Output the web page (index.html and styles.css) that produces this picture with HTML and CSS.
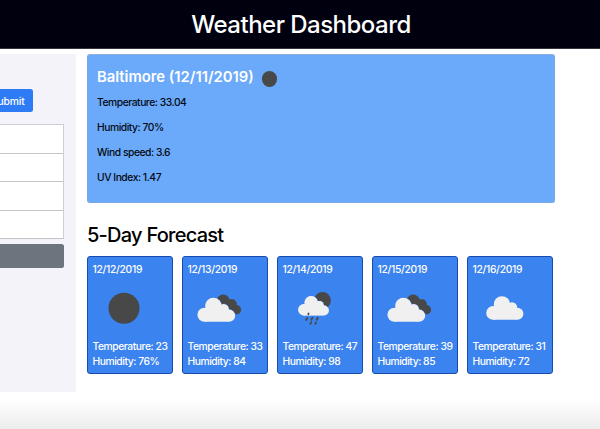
FILE: index.html
```html
<!DOCTYPE html>
<html lang="en">
<head>
<meta charset="utf-8">
<title>Weather Dashboard</title>
<link rel="stylesheet" href="styles.css">
</head>
<body>
<svg class="defs" aria-hidden="true">
  <defs>
    <g id="cloud">
      <circle cx="7" cy="17" r="7"/>
      <circle cx="16" cy="8.3" r="8.3"/>
      <circle cx="26.2" cy="11.5" r="5.3"/>
      <circle cx="31.7" cy="17.9" r="6.1"/>
      <path d="M7 11h12l12 3v10H7z"/>
    </g>
    <g id="clouds">
      <g fill="#484848">
        <circle cx="41" cy="17.8" r="6.6"/>
        <circle cx="50" cy="20.6" r="4.6"/>
        <circle cx="54.3" cy="26.4" r="4.6"/>
        <path d="M37 17l12-1 6 7-3 7-10-3z"/>
      </g>
      <use href="#cloud" x="15.2" y="14.5" fill="#3b83ee" stroke="#3b83ee" stroke-width=".5"/>
      <use href="#cloud" x="15.2" y="14.5" fill="#f0f0f0"/>
    </g>
  </defs>
</svg>
<header class="header"><h1>Weather Dashboard</h1></header>
<div class="layout">
  <aside class="sidebar">
    <button class="submit">Submit</button>
    <ul class="history"><li></li><li></li><li></li><li></li></ul>
    <button class="clear" aria-label="Clear"></button>
  </aside>
  <main class="main">
    <section class="current">
      <h2><span>Baltimore (12/11/2019)</span><i class="moon"></i></h2>
      <p>Temperature: 33.04</p>
      <p>Humidity: 70%</p>
      <p>Wind speed: 3.6</p>
      <p>UV Index: 1.47</p>
    </section>
    <h2 class="title">5-Day Forecast</h2>
    <section class="forecast">
      <article class="day">
        <time>12/12/2019</time>
        <svg viewBox="0 0 74 54"><circle cx="36" cy="26.2" r="15.5" fill="#484848"/></svg>
        <p>Temperature: 23</p><p>Humidity: 76%</p>
      </article>
      <article class="day">
        <time>12/13/2019</time>
        <svg viewBox="0 0 74 54"><use href="#clouds" x="-.8" y="1.3"/></svg>
        <p>Temperature: 33</p><p>Humidity: 84</p>
      </article>
      <article class="day">
        <time>12/14/2019</time>
        <svg viewBox="0 0 74 54">
          <circle cx="44.5" cy="18.4" r="8.4" fill="#484848"/>
          <g transform="translate(20.2 14) scale(.81)">
            <use href="#cloud" fill="#f0f0f0" stroke="#3b83ee" stroke-width=".7"/>
            <use href="#cloud" fill="#f0f0f0"/>
          </g>
          <g transform="translate(5 -.2)" stroke="#484848" stroke-width="1.8" stroke-linecap="round">
            <path d="M25.6 31.7l-.3.7M24.2 36.3l-1.1 1.9M29.5 35.8l-1.2 2.2M34.8 36l-1.2 2M28.2 40.4l-.9 1.5M33 40.7l-.7 1.4"/>
          </g>
        </svg>
        <p>Temperature: 47</p><p>Humidity: 98</p>
      </article>
      <article class="day">
        <time>12/15/2019</time>
        <svg viewBox="0 0 74 54"><use href="#clouds" x="-.8" y="1.3"/></svg>
        <p>Temperature: 39</p><p>Humidity: 85</p>
      </article>
      <article class="day">
        <time>12/16/2019</time>
        <svg viewBox="0 0 74 54"><use href="#cloud" transform="translate(18.2 14.2) scale(.985)" fill="#f0f0f0"/></svg>
        <p>Temperature: 31</p><p>Humidity: 72</p>
      </article>
    </section>
  </main>
</div>
</body>
</html>
```
FILE: styles.css
```css
* { box-sizing: border-box; }
body {
  margin: 0;
  height: 429px;
  overflow: hidden;
  font-family: Inter, "Liberation Sans", sans-serif;
  font-size: 10.3px;
  background: linear-gradient(#fff 400px, #ececec 429px);
}
h1, h2, p, ul { margin: 0; padding: 0; font-weight: 500; }
.defs { position: absolute; width: 0; height: 0; }
.header {
  height: 49px;
  background: #00000f;
  border-bottom: 1px solid #34343c;
  color: #fff;
  text-align: center;
}
.header h1 { font-size: 24px; line-height: 49px; letter-spacing: -.52px; padding-left: 2px; }
.layout { display: flex; align-items: flex-start; padding-top: 5px; }
.sidebar { width: 76px; height: 338px; background: #f5f3fa; padding-top: 35px; overflow: hidden; }
button { display: block; border: 0; padding: 0; font-family: inherit; }
.submit {
  width: 50px;
  height: 23px;
  margin-left: -17.5px;
  padding-right: 8px;
  border-radius: 2.5px;
  background: #2e7bf6;
  color: #fff;
  font-size: 10.3px;
  font-weight: 500;
  letter-spacing: -.15px;
  text-align: right;
}
.history { list-style: none; margin: 12px 12px 0 -10px; border: 1px solid #cfced2; border-bottom: 0; background: #fff; }
.history li { height: 28.6px; border-bottom: 1px solid #c5c5c8; }
.clear { width: 74px; height: 24px; margin: 5px 0 0 -10px; border-radius: 2.5px; background: #6c757d; }
.main { width: 468px; margin-left: 11px; }
.current {
  height: 149px;
  padding: 13px 9.5px 0;
  border: 1px solid #78a8e6;
  border-top-color: #8fb0dc;
  border-radius: 3px;
  background: #6ba9fa;
  color: #050b12;
  margin-left: -.5px;
}
.current h2 { display: flex; align-items: center; height: 18px; color: #fff; font-size: 14.8px; font-weight: 600; }
.moon { width: 15.5px; height: 15.5px; margin: 4px 0 0 8px; border-radius: 50%; background: #484848; }
.current p { height: 25px; line-height: 33px; letter-spacing: -.46px; white-space: nowrap; }
.title { margin-top: 18px; font-size: 20px; line-height: 28px; letter-spacing: -.75px; color: #000; white-space: nowrap; }
.forecast { display: flex; gap: 8.8px; margin-top: 7px; }
.day {
  width: 86.2px;
  height: 118px;
  padding: 5px 0 0 4.5px;
  border: 1px solid #174bae;
  border-radius: 3px;
  background: #3b83ee;
  color: #fff;
  white-space: nowrap;
  flex: none;
}
.day time, .day p { display: block; height: 15px; line-height: 15px; font-weight: 500; letter-spacing: -.44px; }
.day time { letter-spacing: -.3px; }
.day svg { display: block; width: 74px; height: 54px; margin: 5px 0 3px -4.5px; }
```
